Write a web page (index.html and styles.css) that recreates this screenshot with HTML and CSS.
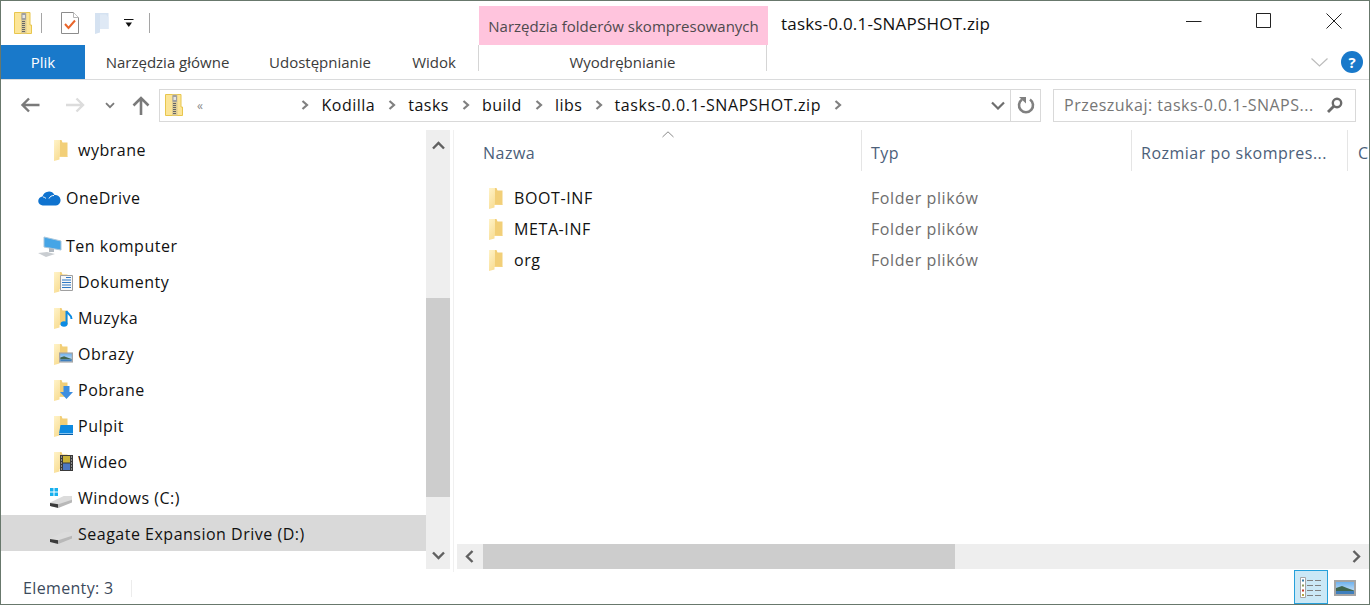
FILE: index.html

```html
<!DOCTYPE html>
<html lang="pl">
<head>
  <meta charset="UTF-8">
  <title>tasks-0.0.1-SNAPSHOT.zip</title>
  <link rel="stylesheet" href="styles.css">
</head>
<body>
  <svg class="defs" aria-hidden="true">
    <defs>
      <linearGradient id="gradFolder" x1="0" y1="0" x2="1" y2="1">
        <stop offset="0" stop-color="#fff3c8"/>
        <stop offset="1" stop-color="#f5d27a"/>
      </linearGradient>
      <linearGradient id="gradSky" x1="0" y1="0" x2="0" y2="1">
        <stop offset="0" stop-color="#6fb2ee"/>
        <stop offset="1" stop-color="#dbeaf6"/>
      </linearGradient>
      <symbol id="folder" viewBox="0 0 15 21">
        <path d="M1 0h7.500l1 2.500H14.500V17H5z" fill="#f2cf78"/>
        <path d="M1 0h6v16.500H14.500V17H6.500V19.500L1 21z" fill="url(#gradFolder)"/>
      </symbol>
      <symbol id="zip" viewBox="0 0 18 22">
        <path d="M.5.500h15.500v12.500h1.500v8.500H.5z" fill="#fce597" stroke="#e8c64e"/>
        <path d="M7 .500h5.500V21.500H7z" fill="#dccb95"/>
        <rect x="7.500" y="1" width="4.500" height="7" rx="1" fill="#a0a0a0"/>
        <rect x="8.500" y="3" width="2.500" height="3" fill="#e4e4e4"/>
        <path d="M8 9h3v1H8zm0 2h3v1H8zm0 2h3v1H8zm0 2h3v1H8zm0 2h3v1H8zm0 2h3v1H8z" fill="#666"/>
      </symbol>
      <symbol id="drive" viewBox="0 0 24 14">
        <path d="M0 8L15 1h9v5L8 13H2L0 11z" fill="#dcdcdc"/>
        <path d="M0 8.500L9 10v4L0 12z" fill="#3b3b3b"/>
        <path d="M9 10l15-5v3L9 14z" fill="#b8b8b8"/>
      </symbol>
      <symbol id="crumb" viewBox="0 0 8 10">
        <path d="M1.500 1L6 5 1.500 9" fill="none" stroke="#808080" stroke-width="2.200"/>
      </symbol>
      <symbol id="photo" viewBox="0 0 22 16">
        <path d="M0 0h22v16H0z" fill="#a5a5a5"/>
        <path d="M2 2h18v12H2z" fill="url(#gradSky)"/>
        <path d="M2 8l6-2 5 2 7 2.500V11H2z" fill="#40664f"/>
        <path d="M2 11h18v3H2z" fill="#3f7fbd"/>
      </symbol>
    </defs>
  </svg>

  <div class="window">
    <header class="titlebar">
      <svg class="qa-zip" width="18" height="22"><use href="#zip"/></svg>
      <span class="qa-sep"></span>
      <svg class="qa-check" width="18" height="22" viewBox="0 0 18 22">
        <path d="M.5.500h12l5 5v16H.5z" fill="#fff" stroke="#8c8c8c"/>
        <path d="M12.500.500v5h5" fill="#fff" stroke="#b5b5b5"/>
        <path d="M4 12l3.500 4L14 8.500" fill="none" stroke="#e9652a" stroke-width="2"/>
      </svg>
      <svg class="qa-folder" width="15" height="21" viewBox="0 0 15 21">
        <path d="M1 0h13.500v16H6v3.500L1 21z" fill="#d5e2f1"/>
        <path d="M6 1.500h6l2.500 3V16H6z" fill="#dfe9f5"/>
      </svg>
      <svg class="qa-more" width="10" height="9" viewBox="0 0 10 9">
        <path d="M0 .500h9.500" stroke="#111" fill="none"/>
        <path d="M1.500 3.500h6.500L4.800 8z" fill="#111"/>
      </svg>
      <span class="qa-sep qa-sep-last"></span>
      <div class="context-tab">Narzędzia folderów skompresowanych</div>
      <div class="title">tasks-0.0.1-SNAPSHOT.zip</div>
      <div class="winbtns">
        <svg width="16" height="16" viewBox="0 0 16 16"><path d="M0 8.500h15.500" stroke="#222" fill="none"/></svg>
        <svg width="16" height="16" viewBox="0 0 16 16"><path d="M.5.500h14v14H.5z" stroke="#222" fill="none"/></svg>
        <svg width="16" height="16" viewBox="0 0 16 16"><path d="M.5.500l15 15m0-15l-15 15" stroke="#222" fill="none"/></svg>
      </div>
    </header>

    <nav class="ribbon">
      <div class="tab tab-file">Plik</div>
      <div class="tab tab-home">Narzędzia główne</div>
      <div class="tab tab-share">Udostępnianie</div>
      <div class="tab tab-view">Widok</div>
      <div class="tab tab-extract">Wyodrębnianie</div>
      <svg class="ribbon-toggle" width="17" height="9" viewBox="0 0 17 9"><path d="M.5.500l8 7.500 8-7.500" fill="none" stroke="#bcbcbc" stroke-width="1.200"/></svg>
      <div class="help">?</div>
    </nav>

    <div class="navbar">
      <svg class="nav-back" width="20" height="16" viewBox="0 0 20 16"><path d="M19.500 8H2.500M9 1.500L2.500 8 9 14.500" fill="none" stroke="#7a7a7a" stroke-width="2.400"/></svg>
      <svg class="nav-fwd" width="20" height="16" viewBox="0 0 20 16"><path d="M0 8h17M10.500 1.500L17 8l-6.500 6.500" fill="none" stroke="#dcdcdc" stroke-width="2.400"/></svg>
      <svg class="nav-recent" width="10" height="7" viewBox="0 0 10 7"><path d="M1 1.200l4 4 4-4" fill="none" stroke="#7a7a7a" stroke-width="1.800"/></svg>
      <svg class="nav-up" width="18" height="19" viewBox="0 0 18 19"><path d="M9 19V2.500M1.500 9.500L9 2l7.500 7.500" fill="none" stroke="#7a7a7a" stroke-width="2.600"/></svg>
      <div class="address">
        <svg class="addr-icon" width="18" height="22"><use href="#zip"/></svg>
        <span class="addr-more">«</span>
        <svg class="addr-sep addr-sep-first" width="8" height="10"><use href="#crumb"/></svg>
        <span class="crumb">Kodilla</span>
        <svg class="addr-sep" width="8" height="10"><use href="#crumb"/></svg>
        <span class="crumb">tasks</span>
        <svg class="addr-sep" width="8" height="10"><use href="#crumb"/></svg>
        <span class="crumb">build</span>
        <svg class="addr-sep" width="8" height="10"><use href="#crumb"/></svg>
        <span class="crumb">libs</span>
        <svg class="addr-sep" width="8" height="10"><use href="#crumb"/></svg>
        <span class="crumb crumb-last">tasks-0.0.1-SNAPSHOT.zip</span>
        <svg class="addr-sep" width="8" height="10"><use href="#crumb"/></svg>
        <svg class="addr-drop" width="14" height="9" viewBox="0 0 14 9"><path d="M1 1.500l6 6 6-6" fill="none" stroke="#6e6e6e" stroke-width="2.200"/></svg>
        <div class="addr-refresh">
          <svg width="18" height="18" viewBox="0 0 18 18"><path d="M5 3.500A7 7 0 1 0 13 3.500" fill="none" stroke="#808080" stroke-width="2.600"/><path d="M2 1h7v6.500z" fill="#808080"/></svg>
        </div>
      </div>
      <div class="search">
        <span class="search-text">Przeszukaj: tasks-0.0.1-SNAPS...</span>
        <svg width="16" height="16" viewBox="0 0 16 16"><circle cx="10" cy="6" r="4.200" fill="none" stroke="#6b6b6b" stroke-width="2.400"/><path d="M7 9l-6 6" stroke="#6b6b6b" stroke-width="2.800"/></svg>
      </div>
    </div>

    <div class="main">
      <aside class="sidebar">
        <div class="tree">
          <div class="row row-child row-gap">
            <svg class="ico" width="15" height="21"><use href="#folder"/></svg><span>wybrane</span>
          </div>
          <div class="row row-top row-gap">
            <svg class="ico-top" width="23" height="16" viewBox="0 0 23 16"><path d="M5 15.500a4.500 4.500 0 0 1-.5-9 6.500 6.500 0 0 1 12-1.500 5 5 0 0 1 1.500 10.500z" fill="#0f73cf"/><path d="M5 7c1 0 2 .5 3 1.500M16 5.500c-2.500 0-4 1-5 3" fill="none" stroke="#fff"/></svg><span>OneDrive</span>
          </div>
          <div class="row row-top">
            <svg class="ico-top ico-pc" width="24" height="21" viewBox="0 0 24 21"><path d="M6 1l17 4v9L6 11z" fill="#45a5e6" stroke="#a8c6dc"/><path d="M11 12l5 1v3h-5z" fill="#b0b8c0"/><path d="M0 17l9-1 8 2-9 3z" fill="#c9cdd1"/></svg><span>Ten komputer</span>
          </div>
          <div class="row row-child">
            <span class="lib"><svg width="15" height="21"><use href="#folder"/></svg>
              <svg class="badge" width="13" height="16" viewBox="0 0 13 16"><path d="M.5.500h12v15H.5z" fill="#f7f7f7" stroke="#a0a0a0"/><path d="M6 2.500h5M2 5h9M2 7.500h9M2 10h9M2 12.500h9" stroke="#2f78c4"/></svg></span><span>Dokumenty</span>
          </div>
          <div class="row row-child">
            <span class="lib"><svg width="15" height="21"><use href="#folder"/></svg>
              <svg class="badge" width="13" height="17" viewBox="0 0 13 17"><ellipse cx="4" cy="14" rx="3.500" ry="2.800" fill="#0b8be4"/><path d="M6.500 14V1c1 3 5 3 5 8" fill="none" stroke="#0b8be4" stroke-width="2"/></svg></span><span>Muzyka</span>
          </div>
          <div class="row row-child">
            <span class="lib"><svg width="15" height="21"><use href="#folder"/></svg>
              <svg class="badge" width="14" height="11"><use href="#photo"/></svg></span><span>Obrazy</span>
          </div>
          <div class="row row-child">
            <span class="lib"><svg width="15" height="21"><use href="#folder"/></svg>
              <svg class="badge" width="13" height="13" viewBox="0 0 13 13"><path d="M3.500 0h6v6H13l-6.500 7L0 6h3.500z" fill="#3d8ee0"/></svg></span><span>Pobrane</span>
          </div>
          <div class="row row-child">
            <span class="lib"><svg width="15" height="21"><use href="#folder"/></svg>
              <svg class="badge" width="14" height="10" viewBox="0 0 14 10"><path d="M1.500 0H14v8.500H0z" fill="#0f8ae0"/><path d="M0 9.500h14" stroke="#0a5fa8"/></svg></span><span>Pulpit</span>
          </div>
          <div class="row row-child">
            <span class="lib"><svg width="15" height="21"><use href="#folder"/></svg>
              <svg class="badge" width="13" height="16" viewBox="0 0 13 16"><path d="M0 0h13v16H0z" fill="#3a3a3a"/><path d="M3 1h7v6.500H3z" fill="#c9b23a"/><path d="M3 8.500h7V15H3z" fill="#4d78c4"/><path d="M1 1.500h1v1H1zm0 3h1v1H1zm0 3h1v1H1zm0 3h1v1H1zm0 3h1v1H1zm10-12h1v1h-1zm0 3h1v1h-1zm0 3h1v1h-1zm0 3h1v1h-1zm0 3h1v1h-1z" fill="#ddd"/></svg></span><span>Wideo</span>
          </div>
          <div class="row row-drive">
            <span class="drv">
              <svg class="win-logo" width="8" height="8" viewBox="0 0 8 8"><path d="M0 0h3.500v3.500H0zm4.500 0H8v3.500H4.500zM0 4.500h3.500V8H0zm4.500 0H8V8H4.500z" fill="#17b0ee"/></svg>
              <svg width="22" height="13"><use href="#drive"/></svg>
            </span><span>Windows (C:)</span>
          </div>
          <div class="row row-drive row-selected">
            <span class="drv"><svg width="22" height="13"><use href="#drive"/></svg></span><span>Seagate Expansion Drive (D:)</span>
          </div>
        </div>
        <div class="vscroll">
          <svg class="arrow-v" width="13" height="9" viewBox="0 0 13 9"><path d="M1 7.500l5.500-5.500 5.500 5.500" fill="none" stroke="#606060" stroke-width="2.400"/></svg>
          <div class="vthumb"></div>
          <svg class="arrow-v arrow-down" width="13" height="9" viewBox="0 0 13 9"><path d="M1 1.500l5.500 5.500 5.500-5.500" fill="none" stroke="#606060" stroke-width="2.400"/></svg>
        </div>
      </aside>

      <section class="files">
        <div class="file-area">
          <div class="headers">
            <div class="col col-name">Nazwa
              <svg class="sort" width="12" height="7" viewBox="0 0 12 7"><path d="M.5 6L6 .8 11.500 6" fill="none" stroke="#8a8a8a"/></svg>
            </div>
            <div class="col col-type">Typ</div>
            <div class="col col-size">Rozmiar po skompres...</div>
            <div class="col col-extra">C</div>
          </div>
          <div class="file">
            <svg width="15" height="21"><use href="#folder"/></svg><span class="file-name">BOOT-INF</span><span class="file-type">Folder plików</span>
          </div>
          <div class="file">
            <svg width="15" height="21"><use href="#folder"/></svg><span class="file-name">META-INF</span><span class="file-type">Folder plików</span>
          </div>
          <div class="file">
            <svg width="15" height="21"><use href="#folder"/></svg><span class="file-name">org</span><span class="file-type">Folder plików</span>
          </div>
        </div>
        <div class="hscroll">
          <svg width="9" height="13" viewBox="0 0 9 13"><path d="M7.500 1L2 6.500 7.500 12" fill="none" stroke="#606060" stroke-width="2.400"/></svg>
          <div class="hthumb"></div>
          <svg class="arrow-right" width="9" height="13" viewBox="0 0 9 13"><path d="M1.500 1L7 6.500 1.500 12" fill="none" stroke="#606060" stroke-width="2.400"/></svg>
        </div>
      </section>
    </div>

    <footer class="status">
      <span class="count">Elementy: 3</span>
      <span class="status-sep"></span>
      <div class="view view-details">
        <svg width="22" height="21" viewBox="0 0 22 21">
          <path d="M.5.500h5v20h-5z" fill="#fff" stroke="#a5a5a5"/>
          <path d="M2 2.500h2v2H2z" fill="#3a7ca5"/><path d="M2 7.500h2v2H2z" fill="#8a9a5b"/><path d="M2 12.500h2v2H2z" fill="#c0392b"/><path d="M2 17h2v2H2z" fill="#b5a642"/>
          <path d="M7 3.500h6m2 0h6M7 8.500h6m2 0h6M7 13.500h6m2 0h6M7 18.500h6m2 0h6" stroke="#808080"/>
        </svg>
      </div>
      <div class="view view-large">
        <svg width="22" height="16"><use href="#photo"/></svg>
      </div>
    </footer>
  </div>
</body>
</html>
```

FILE: styles.css

```css
* {
  box-sizing: border-box;
}
html, body {
  margin: 0;
  padding: 0;
}
body {
  font-family: "Open Sans", "Noto Sans", Arial, sans-serif;
  font-size: 16px;
  letter-spacing: 0.5px;
  color: #1a1a1a;
  background-color: #fff;
}
svg {
  display: block;
  flex: none;
}
.defs {
  width: 0;
  height: 0;
}
.window {
  width: 1370px;
  height: 605px;
  border: 1px solid #68786c;
  display: flex;
  flex-direction: column;
  overflow: hidden;
}

/* title bar */
.titlebar {
  height: 44px;
  display: flex;
  align-items: center;
  flex: none;
}
.qa-zip {
  margin-left: 13px;
}
.qa-sep {
  width: 1px;
  height: 20px;
  background-color: #a5a5a5;
  margin-left: 9px;
}
.qa-check {
  margin-left: 19px;
}
.qa-folder {
  margin-left: 15px;
}
.qa-more {
  margin-left: 15px;
}
.qa-sep-last {
  margin-left: 15px;
}
.context-tab {
  width: 289px;
  height: 39px;
  margin: 5px 0 0 329px;
  align-self: flex-start;
  background-color: #ffc4dd;
  color: #4e4a4e;
  font-size: 15px;
  letter-spacing: 0;
  text-align: center;
  line-height: 41px;
  white-space: nowrap;
}
.title {
  margin-left: 13px;
  font-size: 17px;
  letter-spacing: 0.2px;
  color: #111;
  white-space: nowrap;
}
.winbtns {
  margin-left: auto;
  width: 156px;
  margin-right: 27px;
  display: flex;
  justify-content: space-between;
  position: relative;
  top: -2px;
}

/* ribbon tabs */
.ribbon {
  height: 35px;
  flex: none;
  display: flex;
  border-bottom: 1px solid #dadbdc;
  font-size: 15px;
  letter-spacing: 0;
  color: #3b3b3b;
}
.tab {
  height: 34px;
  display: flex;
  align-items: center;
  justify-content: center;
  white-space: nowrap;
}
.tab-file {
  width: 84px;
  background-color: #1979ca;
  color: #fff;
}
.tab-home {
  width: 165px;
}
.tab-share {
  width: 142px;
  margin-left: -1px;
}
.tab-view {
  width: 86px;
}
.tab-extract {
  width: 289px;
  height: 26px;
  margin-left: 1px;
  padding-top: 8px;
  border-left: 1px solid #d5d5d5;
  border-right: 1px solid #d5d5d5;
}
.ribbon-toggle {
  margin: 13px 0 0 544px;
}
.help {
  width: 22px;
  height: 22px;
  margin: 6px 0 0 13px;
  border-radius: 50%;
  background-color: #1979ca;
  color: #fff;
  font-size: 15px;
  font-weight: 700;
  text-align: center;
  line-height: 22px;
}

/* address bar */
.navbar {
  height: 50px;
  flex: none;
  display: flex;
  align-items: center;
}
.nav-back {
  margin-left: 19px;
}
.nav-fwd {
  margin-left: 26px;
}
.nav-recent {
  margin-left: 19px;
}
.nav-up {
  margin-left: 17px;
}
.address {
  width: 882px;
  height: 33px;
  margin-left: 9px;
  border: 1px solid #d9d9d9;
  display: flex;
  align-items: center;
  color: #111;
}
.addr-icon {
  margin-left: 5px;
}
.addr-more {
  margin-left: 14px;
  color: #8a8a8a;
  font-size: 12px;
}
.addr-sep {
  margin: 0 12px 0 13px;
}
.addr-sep-first {
  margin-left: 98px;
}
.crumb {
  white-space: nowrap;
}
.crumb-last {
  letter-spacing: 0.6px;
  margin-left: -1px;
}
.addr-drop {
  margin-left: auto;
}
.addr-refresh {
  width: 30px;
  height: 31px;
  margin-left: 5px;
  border-left: 1px solid #d9d9d9;
  display: flex;
  align-items: center;
  justify-content: center;
}
.search {
  width: 303px;
  height: 33px;
  margin-left: 12px;
  border: 1px solid #d9d9d9;
  display: flex;
  align-items: center;
  justify-content: space-between;
  padding: 0 12px 0 10px;
  color: #767676;
}
.search-text {
  white-space: nowrap;
}

/* main area */
.main {
  flex: 1;
  min-height: 0;
  display: flex;
}
.sidebar {
  width: 453px;
  flex: none;
  display: flex;
  padding-right: 3px;
  border-right: 1px solid #f0f0f0;
}
.tree {
  width: 425px;
  padding-top: 1px;
}
.row {
  height: 36px;
  padding-top: 2px;
  display: flex;
  align-items: center;
  white-space: nowrap;
  color: #111;
}
.row-gap {
  margin-bottom: 12px;
}
.row-top {
  padding-left: 37px;
}
.row-child {
  padding-left: 52px;
}
.row-child > svg {
  margin-right: 10px;
}
.row-drive {
  padding-left: 49px;
}
.row-selected {
  background-color: #d9d9d9;
}
.ico-top {
  margin-right: 5px;
}
.ico-pc {
  margin-right: 4px;
}
.lib {
  width: 25px;
  height: 21px;
  display: flex;
  position: relative;
}
.badge {
  position: absolute;
  right: 5px;
  bottom: 2px;
}
.drv {
  width: 28px;
  height: 20px;
  display: flex;
  align-items: flex-end;
  position: relative;
}
.win-logo {
  position: absolute;
  left: 0;
  top: 0;
}
.vscroll {
  width: 24px;
  margin-bottom: 3px;
  background-color: #eeeeee;
  display: flex;
  flex-direction: column;
  align-items: center;
}
.arrow-v {
  margin-top: 11px;
}
.vthumb {
  width: 24px;
  height: 199px;
  margin-top: 148px;
  background-color: #cdcdcd;
}
.arrow-down {
  margin-top: auto;
  margin-bottom: 9px;
}

/* file list */
.files {
  flex: 1;
  min-width: 0;
  margin-left: 3px;
  display: flex;
  flex-direction: column;
}
.file-area {
  flex: 1;
  overflow: hidden;
}
.headers {
  height: 42px;
  display: flex;
  color: #4c607a;
  margin-bottom: 10px;
}
.col {
  height: 41px;
  display: flex;
  align-items: center;
  white-space: nowrap;
  padding: 5px 0 0 9px;
  position: relative;
  border-right: 1px solid #e5e5e5;
}
.col-name {
  width: 405px;
  padding-left: 26px;
}
.col-type {
  width: 270px;
}
.col-size {
  width: 216px;
}
.col-extra {
  border-right: 0;
  padding-left: 10px;
}
.sort {
  position: absolute;
  left: 205px;
  top: 1px;
}
.file {
  height: 31px;
  padding-top: 1px;
  display: flex;
  align-items: center;
  padding-left: 31px;
  color: #111;
  letter-spacing: 0.6px;
}
.file-name {
  width: 357px;
  margin-left: 11px;
}
.file-type {
  color: #6d6d6d;
}
.hscroll {
  height: 25px;
  margin-bottom: 3px;
  flex: none;
  background-color: #eeeeee;
  display: flex;
  align-items: center;
  padding: 0 8px;
}
.hthumb {
  width: 472px;
  height: 25px;
  margin-left: 9px;
  background-color: #cdcdcd;
}
.arrow-right {
  margin-left: auto;
}

/* status bar */
.status {
  height: 32px;
  flex: none;
  display: flex;
  align-items: center;
  letter-spacing: 0.35px;
  color: #3c4a5c;
}
.count {
  margin-left: 22px;
  white-space: nowrap;
}
.status-sep {
  width: 1px;
  height: 17px;
  margin-left: 17px;
  background-color: #ececec;
}
.view {
  display: flex;
  align-items: center;
  justify-content: center;
}
.view-details {
  width: 34px;
  height: 34px;
  margin-left: auto;
  background-color: #cbe8f6;
  border: 1px solid #26a0da;
  align-self: flex-end;
}
.view-large {
  width: 22px;
  margin: 0 13px 0 6px;
}
```
